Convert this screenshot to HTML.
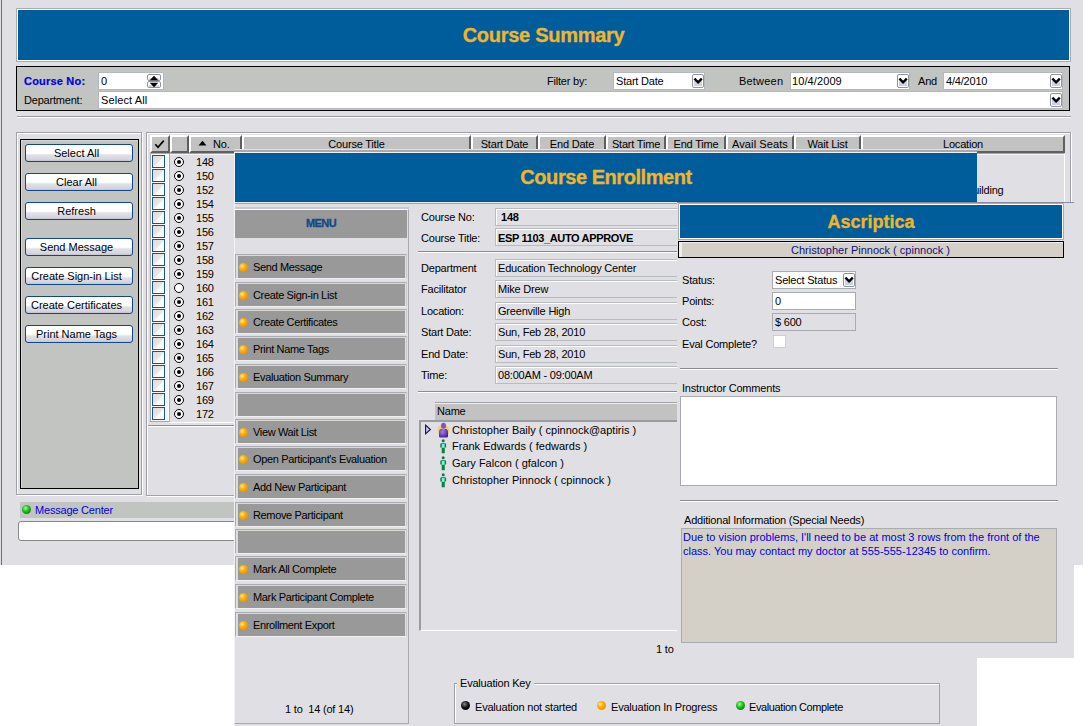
<!DOCTYPE html>
<html><head><meta charset="utf-8">
<style>
*{box-sizing:border-box;margin:0;padding:0}
html,body{width:1091px;height:726px;overflow:hidden;background:#fff}
body{position:relative;font-family:"Liberation Sans",sans-serif;font-size:11px;color:#000;letter-spacing:-0.2px}
.a{position:absolute}
.t{position:absolute;white-space:pre;line-height:13px}
.bg{background:#e0dfe3}
.banner{background:#005d9b;border:1px solid #a9adb3;box-shadow:inset 0 0 0 1px #fff}
.title{position:absolute;white-space:pre;color:#f0b52a;font-weight:bold;text-align:center;letter-spacing:0;-webkit-text-stroke:0.3px #f0b52a}
.sel{position:absolute;background:#fff;border:1px solid #b4b8bc}
.dd{position:absolute;width:13px;height:14px;border:1px solid #9aa0a8;border-radius:2px;background:linear-gradient(#e6e8f0,#c8cadc)}
.dd:after{content:"";position:absolute;left:3px;top:2px;width:4px;height:4px;border-right:2px solid #333;border-bottom:2px solid #333;transform:rotate(45deg)}
.btn{position:absolute;width:108px;height:18px;border:1px solid #124684;border-radius:3px;background:linear-gradient(#fff 0%,#fff 52%,#e0e0e6 62%,#d6d6de 88%,#c4c4d4 100%);text-align:center;line-height:16px;padding-right:5px;white-space:pre;letter-spacing:0}
.mb{position:absolute;left:235px;width:172px;height:25px;border:1px solid #a8acb0;border-right-color:#c8cacc;border-bottom-color:#f0f0f0}
.mb i{position:absolute;left:1px;top:0px;right:1px;bottom:0px;background:#999;border-top:1px solid #dcdad0;border-left:1px solid #dcdad0;}
.dot{position:absolute;width:9px;height:9px;border-radius:50%;background:radial-gradient(circle at 35% 35%,#ffe9a0 0,#ffb000 35%,#f08a00 80%)}
.hd{position:absolute;top:135px;height:18px;background:#c1c2c1;border-left:2px solid #fff;border-top:2px solid #fff;border-right:2px solid #5f5f5f;border-bottom:2px solid #5f5f5f;text-align:center;line-height:14px;white-space:pre}
.cb{position:absolute;left:152px;width:13px;height:13px;border:1.3px solid #1c5590;background:linear-gradient(135deg,#dcdcd8 0%,#e6e6e2 48%,#f8f8f6 56%,#fff 100%)}
.rd{position:absolute;left:174px;width:10px;height:10px;border:1.4px solid #000;border-radius:50%;background:#fff}
.rd.on:after{content:"";position:absolute;left:1.6px;top:1.6px;width:4px;height:4px;border-radius:50%;background:#000}
.num{position:absolute;left:196px;white-space:pre}
.fld{position:absolute;left:495px;width:260px;height:18px;border:1px solid #b8bcc0;box-shadow:inset 1px 1px 0 #fff}
.lab{position:absolute;left:421px;white-space:pre;line-height:13px}
</style></head><body>

<!-- main window -->
<div class="a bg" style="left:0;top:0;width:1083px;height:565px"></div>
<div class="a" style="left:1px;top:0;width:1px;height:565px;background:#6b6b86"></div>

<!-- course summary banner -->
<div class="a banner" style="left:16px;top:8px;width:1055px;height:54px"></div>
<div class="title" style="left:16px;top:23px;width:1055px;font-size:20px;line-height:24px;letter-spacing:-0.28px">Course Summary</div>

<!-- filter box -->
<div class="a" style="left:16px;top:66px;width:1054px;height:45px;background:#c2c4c1;border:1.5px solid #000"></div>
<div class="t" style="left:24px;top:75px;color:#0000e0;font-weight:bold;letter-spacing:0.2px;-webkit-text-stroke:0.2px #0000e0">Course No:</div>
<div class="sel" style="left:98px;top:72px;width:66px;height:18px"></div>
<div class="t" style="left:101px;top:75px">0</div>
<svg class="a" style="left:147px;top:74px" width="14" height="14" viewBox="0 0 14 14"><rect x="0.5" y="0.5" width="13" height="6" rx="1.5" fill="#fff" stroke="#8f959d"/><rect x="0.5" y="7.5" width="13" height="6" rx="1.5" fill="#fff" stroke="#8f959d"/><rect x="2" y="4" width="10" height="2" fill="#d6d6ea"/><rect x="2" y="11" width="10" height="2" fill="#d6d6ea"/><path d="M2.8 6.2 L7 1.8 L11.2 6.2 Z" fill="#000"/><path d="M2.8 8.8 L7 13.2 L11.2 8.8 Z" fill="#000"/></svg>
<div class="t" style="left:24px;top:94px">Department:</div>
<div class="sel" style="left:98px;top:91px;width:965px;height:18px"></div>
<div class="t" style="left:101px;top:94px;letter-spacing:0.1px">Select All</div>
<svg class="a" style="left:1050px;top:93px" width="12" height="14" viewBox="0 0 12 14"><rect x="0.5" y="0.5" width="11" height="13" rx="1.5" fill="#fff" stroke="#8f959d"/><rect x="2" y="7" width="8" height="5" fill="#cfd0e4"/><path d="M2.4 4.6 L6.1 8.3 L9.8 4.6" fill="none" stroke="#000" stroke-width="2.4"/></svg>
<div class="t" style="left:547px;top:75px">Filter by:</div>
<div class="sel" style="left:613px;top:72px;width:92px;height:18px"></div>
<div class="t" style="left:616px;top:75px">Start Date</div>
<svg class="a" style="left:692px;top:74px" width="12" height="14" viewBox="0 0 12 14"><rect x="0.5" y="0.5" width="11" height="13" rx="1.5" fill="#fff" stroke="#8f959d"/><rect x="2" y="7" width="8" height="5" fill="#cfd0e4"/><path d="M2.4 4.6 L6.1 8.3 L9.8 4.6" fill="none" stroke="#000" stroke-width="2.4"/></svg>
<div class="t" style="left:739px;top:75px;letter-spacing:0.2px">Between</div>
<div class="sel" style="left:790px;top:72px;width:120px;height:18px"></div>
<div class="t" style="left:792px;top:75px;letter-spacing:0.1px">10/4/2009</div>
<svg class="a" style="left:897px;top:74px" width="12" height="14" viewBox="0 0 12 14"><rect x="0.5" y="0.5" width="11" height="13" rx="1.5" fill="#fff" stroke="#8f959d"/><rect x="2" y="7" width="8" height="5" fill="#cfd0e4"/><path d="M2.4 4.6 L6.1 8.3 L9.8 4.6" fill="none" stroke="#000" stroke-width="2.4"/></svg>
<div class="t" style="left:918px;top:75px">And</div>
<div class="sel" style="left:943px;top:72px;width:120px;height:18px"></div>
<div class="t" style="left:946px;top:75px">4/4/2010</div>
<svg class="a" style="left:1050px;top:74px" width="12" height="14" viewBox="0 0 12 14"><rect x="0.5" y="0.5" width="11" height="13" rx="1.5" fill="#fff" stroke="#8f959d"/><rect x="2" y="7" width="8" height="5" fill="#cfd0e4"/><path d="M2.4 4.6 L6.1 8.3 L9.8 4.6" fill="none" stroke="#000" stroke-width="2.4"/></svg>

<!-- separator -->
<div class="a" style="left:17px;top:116px;width:1054px;height:2px;border-top:1px solid #9c9ca0;border-bottom:1px solid #fff"></div>

<!-- left panel -->
<div class="a" style="left:16px;top:132px;width:126px;height:363px;border:1px solid #a0a0a8;box-shadow:inset 1px 1px 0 #fff,1px 1px 0 #fff"></div>
<div class="a" style="left:20px;top:139px;width:119px;height:350px;background:#c2c4c1;border:1.5px solid #000;box-shadow:inset 1px 1px 0 #d8d8d8"></div>
<div class="btn" style="left:25px;top:144px">Select All</div>
<div class="btn" style="left:25px;top:173px">Clear All</div>
<div class="btn" style="left:25px;top:202px">Refresh</div>
<div class="btn" style="left:25px;top:238px">Send Message</div>
<div class="btn" style="left:25px;top:267px">Create Sign-in List</div>
<div class="btn" style="left:25px;top:296px">Create Certificates</div>
<div class="btn" style="left:25px;top:325px">Print Name Tags</div>

<!-- table -->
<div class="a" style="left:146px;top:132px;width:925px;height:364px;border:1px solid #a0a0a8;box-shadow:inset 1px 1px 0 #fff,1px 1px 0 #fff"></div>
<div class="a" style="left:148px;top:425px;width:920px;height:2px;border-top:1px solid #8c8c90;border-bottom:1px solid #fff"></div>
<div class="a" style="left:169px;top:153px;width:896px;height:270px;border-top:1px solid #a4a4a8;border-right:1px solid #fff;border-bottom:1px solid #fff;box-shadow:inset 0 1px 0 #f4f4f6"></div>
<div class="a" style="left:150px;top:153px;width:20px;height:269px;background:#f6f4f4;border-left:1px solid #a8a8ac;border-top:1px solid #a8a8ac;border-right:1px solid #a8a8ac;border-bottom:1px solid #a8a8ac;box-shadow:inset -1px 0 0 #fff,inset 1px 1px 0 #fff"></div>
<div class="hd" style="left:150px;width:20px"></div><svg class="a" style="left:154px;top:139px" width="11" height="10" viewBox="0 0 11 10"><path d="M1.3 5.3 L4 8.3 L9.8 1.6" fill="none" stroke="#000" stroke-width="1.7"/></svg>
<div class="hd" style="left:170px;width:19px"></div>
<div class="hd" style="left:189px;width:53px"></div>
<div class="hd" style="left:242px;width:229px">Course Title</div>
<div class="hd" style="left:471px;width:67px">Start Date</div>
<div class="hd" style="left:538px;width:68px">End Date</div>
<div class="hd" style="left:606px;width:60px">Start Time</div>
<div class="hd" style="left:666px;width:60px">End Time</div>
<div class="hd" style="left:726px;width:68px;letter-spacing:0.1px">Avail Seats</div>
<div class="hd" style="left:794px;width:67px">Wait List</div>
<div class="hd" style="left:861px;width:204px">Location</div>
<svg class="a" style="left:198px;top:140px" width="9" height="6" viewBox="0 0 9 6"><path d="M0.5 5.5 L4.5 0.8 L8.5 5.5 Z" fill="#000"/></svg>
<div class="t" style="left:213px;top:138px">No.</div>
<div class="t" style="left:966px;top:184px">Building</div>
<div class="cb" style="top:155px"></div>
<div class="rd on" style="top:157px"></div>
<div class="num" style="top:156px">148</div>
<div class="cb" style="top:169px"></div>
<div class="rd on" style="top:171px"></div>
<div class="num" style="top:170px">150</div>
<div class="cb" style="top:183px"></div>
<div class="rd on" style="top:185px"></div>
<div class="num" style="top:184px">152</div>
<div class="cb" style="top:197px"></div>
<div class="rd on" style="top:199px"></div>
<div class="num" style="top:198px">154</div>
<div class="cb" style="top:211px"></div>
<div class="rd on" style="top:213px"></div>
<div class="num" style="top:212px">155</div>
<div class="cb" style="top:225px"></div>
<div class="rd on" style="top:227px"></div>
<div class="num" style="top:226px">156</div>
<div class="cb" style="top:239px"></div>
<div class="rd on" style="top:241px"></div>
<div class="num" style="top:240px">157</div>
<div class="cb" style="top:253px"></div>
<div class="rd on" style="top:255px"></div>
<div class="num" style="top:254px">158</div>
<div class="cb" style="top:267px"></div>
<div class="rd on" style="top:269px"></div>
<div class="num" style="top:268px">159</div>
<div class="cb" style="top:281px"></div>
<div class="rd" style="top:283px"></div>
<div class="num" style="top:282px">160</div>
<div class="cb" style="top:295px"></div>
<div class="rd on" style="top:297px"></div>
<div class="num" style="top:296px">161</div>
<div class="cb" style="top:309px"></div>
<div class="rd on" style="top:311px"></div>
<div class="num" style="top:310px">162</div>
<div class="cb" style="top:323px"></div>
<div class="rd on" style="top:325px"></div>
<div class="num" style="top:324px">163</div>
<div class="cb" style="top:337px"></div>
<div class="rd on" style="top:339px"></div>
<div class="num" style="top:338px">164</div>
<div class="cb" style="top:351px"></div>
<div class="rd on" style="top:353px"></div>
<div class="num" style="top:352px">165</div>
<div class="cb" style="top:365px"></div>
<div class="rd on" style="top:367px"></div>
<div class="num" style="top:366px">166</div>
<div class="cb" style="top:379px"></div>
<div class="rd on" style="top:381px"></div>
<div class="num" style="top:380px">167</div>
<div class="cb" style="top:393px"></div>
<div class="rd on" style="top:395px"></div>
<div class="num" style="top:394px">169</div>
<div class="cb" style="top:407px"></div>
<div class="rd on" style="top:409px"></div>
<div class="num" style="top:408px">172</div>

<!-- message center -->
<div class="a" style="left:20px;top:502px;width:1050px;height:16px;background:#c2c4c1"></div>
<div class="a" style="left:22px;top:505px;width:9px;height:9px;border-radius:50%;background:radial-gradient(circle at 40% 35%,#a0ff90 0,#20c020 40%,#007000 90%)"></div>
<div class="t" style="left:35px;top:504px;color:#0000e0">Message Center</div>
<div class="a" style="left:18px;top:521px;width:1052px;height:20px;background:#fff;border:1px solid #888;border-radius:3px"></div>

<!-- course enrollment window -->
<div class="a bg" style="left:234px;top:149px;width:743px;height:577px;border-left:1px solid #f4f4f6"></div>
<div class="a" style="left:234px;top:149px;width:743px;height:4px;background:#e2e2e6;border-bottom:1px solid #f0f0f2;box-shadow:inset 0 -2px 0 #a8a8b0"></div>
<div class="a" style="left:235px;top:153px;width:742px;height:49px;background:#005d9b;border-bottom:1px solid #0a4f8c"></div>
<div class="a" style="left:235px;top:202px;width:742px;height:1px;background:#ece8e2"></div>
<div class="a" style="left:235px;top:203px;width:742px;height:1px;background:#a0a4a8"></div>
<div class="a" style="left:235px;top:207px;width:174px;height:2px;background:#c8c8d6"></div>
<div class="title" style="left:235px;top:165px;width:742px;font-size:20px;line-height:24px;letter-spacing:-0.45px">Course Enrollment</div>

<!-- menu panel -->
<div class="a" style="left:234px;top:209px;width:175px;height:515px;border:1px solid #a8a8ae;border-left-color:#f4f4f6;border-top-color:#fff"></div>
<div class="a" style="left:235px;top:210px;width:172px;height:28px;background:#999"></div>
<div class="t" style="left:235px;top:217px;width:172px;text-align:center;color:#124888;font-weight:bold;font-size:11px;letter-spacing:-0.6px;-webkit-text-stroke:0.3px #124888">MENU</div>
<div class="mb" style="top:254px"><i></i></div>
<div class="dot" style="left:239px;top:263px"></div>
<div class="t" style="left:253px;top:261px;letter-spacing:-0.35px">Send Message</div>
<div class="mb" style="top:282px"><i></i></div>
<div class="dot" style="left:239px;top:291px"></div>
<div class="t" style="left:253px;top:289px;letter-spacing:-0.35px">Create Sign-in List</div>
<div class="mb" style="top:309px"><i></i></div>
<div class="dot" style="left:239px;top:318px"></div>
<div class="t" style="left:253px;top:316px;letter-spacing:-0.35px">Create Certificates</div>
<div class="mb" style="top:336px"><i></i></div>
<div class="dot" style="left:239px;top:345px"></div>
<div class="t" style="left:253px;top:343px;letter-spacing:-0.35px">Print Name Tags</div>
<div class="mb" style="top:364px"><i></i></div>
<div class="dot" style="left:239px;top:373px"></div>
<div class="t" style="left:253px;top:371px;letter-spacing:-0.35px">Evaluation Summary</div>
<div class="mb" style="top:392px"><i></i></div>
<div class="mb" style="top:419px"><i></i></div>
<div class="dot" style="left:239px;top:428px"></div>
<div class="t" style="left:253px;top:426px;letter-spacing:-0.35px">View Wait List</div>
<div class="mb" style="top:446px"><i></i></div>
<div class="dot" style="left:239px;top:455px"></div>
<div class="t" style="left:253px;top:453px;letter-spacing:-0.35px">Open Participant's Evaluation</div>
<div class="mb" style="top:474px"><i></i></div>
<div class="dot" style="left:239px;top:483px"></div>
<div class="t" style="left:253px;top:481px;letter-spacing:-0.35px">Add New Participant</div>
<div class="mb" style="top:502px"><i></i></div>
<div class="dot" style="left:239px;top:511px"></div>
<div class="t" style="left:253px;top:509px;letter-spacing:-0.35px">Remove Participant</div>
<div class="mb" style="top:529px"><i></i></div>
<div class="mb" style="top:556px"><i></i></div>
<div class="dot" style="left:239px;top:565px"></div>
<div class="t" style="left:253px;top:563px;letter-spacing:-0.35px">Mark All Complete</div>
<div class="mb" style="top:584px"><i></i></div>
<div class="dot" style="left:239px;top:593px"></div>
<div class="t" style="left:253px;top:591px;letter-spacing:-0.35px">Mark Participant Complete</div>
<div class="mb" style="top:612px"><i></i></div>
<div class="dot" style="left:239px;top:621px"></div>
<div class="t" style="left:253px;top:619px;letter-spacing:-0.35px">Enrollment Export</div>
<div class="t" style="left:285px;top:703px">1 to  14 (of 14)</div>

<!-- info fields -->
<div class="lab" style="top:211px">Course No:</div>
<div class="lab" style="top:232px">Course Title:</div>
<div class="fld" style="top:208px"></div>
<div class="fld" style="top:228px"></div>
<div class="t" style="left:501px;top:211px;font-weight:bold">148</div>
<div class="t" style="left:498px;top:232px;font-weight:bold;letter-spacing:-0.35px">ESP 1103_AUTO APPROVE</div>
<div class="a" style="left:418px;top:251px;width:260px;height:2px;border-top:1px solid #8c8c90;border-bottom:1px solid #fff"></div>
<div class="fld" style="top:259px"></div>
<div class="lab" style="top:262px">Department</div>
<div class="t" style="left:498px;top:262px">Education Technology Center</div>
<div class="fld" style="top:280px"></div>
<div class="lab" style="top:283px">Facilitator</div>
<div class="t" style="left:498px;top:283px">Mike Drew</div>
<div class="fld" style="top:302px"></div>
<div class="lab" style="top:305px">Location:</div>
<div class="t" style="left:498px;top:305px">Greenville High</div>
<div class="fld" style="top:323px"></div>
<div class="lab" style="top:326px">Start Date:</div>
<div class="t" style="left:498px;top:326px">Sun, Feb 28, 2010</div>
<div class="fld" style="top:345px"></div>
<div class="lab" style="top:348px">End Date:</div>
<div class="t" style="left:498px;top:348px">Sun, Feb 28, 2010</div>
<div class="fld" style="top:366px"></div>
<div class="lab" style="top:369px">Time:</div>
<div class="t" style="left:498px;top:369px">08:00AM - 09:00AM</div>
<div class="a" style="left:418px;top:391px;width:260px;height:2px;border-top:1px solid #8c8c90;border-bottom:1px solid #fff"></div>

<!-- name list -->
<div class="a" style="left:435px;top:402px;width:245px;height:18px;background:#c1c2c1;border-top:1px solid #a0a4a8;box-shadow:inset 0 1px 0 #eee"></div>
<div class="t" style="left:437px;top:405px">Name</div>
<div class="a" style="left:419px;top:420px;width:260px;height:211px;border-left:2px solid #9c9ca0;border-top:2px solid #9c9ca0;border-bottom:1px solid #fff"></div>
<svg class="a" style="left:424px;top:424px" width="8" height="12" viewBox="0 0 8 12"><path d="M1.6 1.2 L6.4 5.5 L1.6 9.8 Z" fill="#c8c8f8" stroke="#10104a" stroke-width="1.1"/></svg>
<svg class="a" style="left:437px;top:422px" width="13" height="16" viewBox="0 0 13 16"><defs><radialGradient id="pg" cx="40%" cy="35%" r="70%"><stop offset="0" stop-color="#a080e8"/><stop offset="1" stop-color="#4a1890"/></radialGradient></defs><ellipse cx="6.5" cy="8.5" rx="5.8" ry="6" fill="#f4c84a" opacity=".75"/><ellipse cx="6.5" cy="3.8" rx="2.5" ry="3" fill="#8050d0"/><path d="M4.3 6.8 Q2 7.2 2 10.5 L2 14.3 Q2 15.6 3.5 15.6 L9.5 15.6 Q11 15.6 11 14.3 L11 10.5 Q11 7.2 8.7 6.8 Q6.5 8.2 4.3 6.8 Z" fill="url(#pg)"/></svg>
<div class="t" style="left:452px;top:424px;letter-spacing:0">Christopher Baily ( cpinnock@aptiris )</div>
<svg class="a" style="left:440px;top:439px" width="7" height="15" viewBox="0 0 7 15"><circle cx="3.2" cy="1.7" r="1.5" fill="#107848"/><path d="M0.3 5 Q0.3 4 3.2 4 Q6.1 4 6.1 5 L6.1 8.6 L4.8 8.6 L4.8 14.3 L1.7 14.3 L1.7 8.6 L0.3 8.6 Z" fill="#108048"/><rect x="1.8" y="4.8" width="2.8" height="4" fill="#80f0d8"/></svg>
<div class="t" style="left:452px;top:440px;letter-spacing:0">Frank Edwards ( fedwards )</div>
<svg class="a" style="left:440px;top:456px" width="7" height="15" viewBox="0 0 7 15"><circle cx="3.2" cy="1.7" r="1.5" fill="#107848"/><path d="M0.3 5 Q0.3 4 3.2 4 Q6.1 4 6.1 5 L6.1 8.6 L4.8 8.6 L4.8 14.3 L1.7 14.3 L1.7 8.6 L0.3 8.6 Z" fill="#108048"/><rect x="1.8" y="4.8" width="2.8" height="4" fill="#80f0d8"/></svg>
<div class="t" style="left:452px;top:457px;letter-spacing:0">Gary Falcon ( gfalcon )</div>
<svg class="a" style="left:440px;top:473px" width="7" height="15" viewBox="0 0 7 15"><circle cx="3.2" cy="1.7" r="1.5" fill="#107848"/><path d="M0.3 5 Q0.3 4 3.2 4 Q6.1 4 6.1 5 L6.1 8.6 L4.8 8.6 L4.8 14.3 L1.7 14.3 L1.7 8.6 L0.3 8.6 Z" fill="#108048"/><rect x="1.8" y="4.8" width="2.8" height="4" fill="#80f0d8"/></svg>
<div class="t" style="left:452px;top:474px;letter-spacing:0">Christopher Pinnock ( cpinnock )</div>
<div class="t" style="left:656px;top:643px">1 to</div>

<!-- evaluation key -->
<div class="a" style="left:454px;top:683px;width:486px;height:41px;border:1px solid #a0a0a8;box-shadow:inset 1px 1px 0 #fff"></div>
<div class="t bg" style="left:457px;top:677px;padding:0 3px">Evaluation Key</div>
<div class="a" style="left:461px;top:701px;width:9px;height:9px;border-radius:50%;background:radial-gradient(circle at 40% 35%,#888 0,#111 45%,#000 90%)"></div>
<div class="t" style="left:475px;top:701px">Evaluation not started</div>
<div class="dot" style="left:597px;top:701px"></div>
<div class="t" style="left:611px;top:701px">Evaluation In Progress</div>
<div class="a" style="left:736px;top:701px;width:9px;height:9px;border-radius:50%;background:radial-gradient(circle at 40% 35%,#a0ff90 0,#20c020 40%,#007000 90%)"></div>
<div class="t" style="left:749px;top:701px;letter-spacing:-0.4px">Evaluation Complete</div>

<!-- ascriptica -->
<div class="a bg" style="left:677px;top:202px;width:397px;height:456px;border-top:1px solid #8a8aa0"></div>
<div class="a banner" style="left:678px;top:203px;width:386px;height:37px"></div>
<div class="title" style="left:678px;top:211px;width:386px;font-size:18px;line-height:22px">Ascriptica</div>
<div class="a" style="left:678px;top:241px;width:386px;height:17px;background:#d4d0c8;border:1px solid #000;box-shadow:inset 3px 1px 0 #eeeef0"></div>
<div class="t" style="left:678px;top:244px;width:385px;text-align:center;color:#10107a;letter-spacing:0">Christopher Pinnock ( cpinnock )</div>

<div class="t" style="left:682px;top:274px">Status:</div>
<div class="t" style="left:682px;top:295px">Points:</div>
<div class="t" style="left:682px;top:316px">Cost:</div>
<div class="t" style="left:682px;top:338px">Eval Complete?</div>
<div class="sel" style="left:772px;top:271px;width:84px;height:18px;border-color:#a8acb0"></div>
<div class="t" style="left:775px;top:274px">Select Status</div>
<svg class="a" style="left:843px;top:273px" width="12" height="14" viewBox="0 0 12 14"><rect x="0.5" y="0.5" width="11" height="13" rx="1.5" fill="#fff" stroke="#8f959d"/><rect x="2" y="7" width="8" height="5" fill="#cfd0e4"/><path d="M2.4 4.6 L6.1 8.3 L9.8 4.6" fill="none" stroke="#000" stroke-width="2.4"/></svg>
<div class="sel" style="left:772px;top:292px;width:84px;height:18px;border-color:#a8acb0"></div>
<div class="t" style="left:775px;top:295px">0</div>
<div class="a" style="left:772px;top:313px;width:84px;height:18px;background:#e0dfe3;border:1px solid #a8acb0"></div>
<div class="t" style="left:775px;top:316px">$ 600</div>
<div class="a" style="left:773px;top:335px;width:13px;height:13px;background:#fff;border:1px solid #d0d0c4"></div>

<div class="a" style="left:680px;top:368px;width:378px;height:2px;border-top:1px solid #8c8c90;border-bottom:1px solid #fff"></div>
<div class="t" style="left:682px;top:382px">Instructor Comments</div>
<div class="a" style="left:680px;top:396px;width:377px;height:90px;background:#fff;border:1px solid #a8acb0"></div>
<div class="a" style="left:680px;top:500px;width:378px;height:2px;border-top:1px solid #8c8c90;border-bottom:1px solid #fff"></div>
<div class="t" style="left:684px;top:514px">Additional Information (Special Needs)</div>
<div class="a" style="left:681px;top:528px;width:376px;height:115px;background:#d4d0c8;border:1px solid #a8acb0"></div>
<div class="t" style="left:683px;top:530px;color:#0000e0;line-height:14px;letter-spacing:0">Due to vision problems, I'll need to be at most 3 rows from the front of the
class. You may contact my doctor at 555-555-12345 to confirm.</div>

</body></html>
